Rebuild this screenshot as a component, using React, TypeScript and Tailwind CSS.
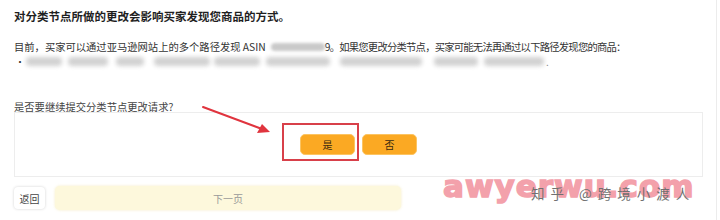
import React from 'react';

const blurBits = [
  { w: 36, ml: 0 },
  { w: 40, ml: 6 },
  { w: 28, ml: 8 },
  { w: 56, ml: 10 },
  { w: 46, ml: 4 },
  { w: 64, ml: 6 },
  { w: 82, ml: 10 },
  { w: 44, ml: 12 },
  { w: 60, ml: 6 },
];

function App() {
  return (
    <div className="relative w-[720px] h-[220px] overflow-hidden bg-white font-['Noto_Sans_CJK_SC',sans-serif]">
      <div className="w-[717px] h-full border-r border-[#ececec] pl-[14px] pr-[13px] pt-[8px]">
        <h1 className="text-[11.5px] leading-[16px] font-bold text-[#1f1f1f]">
          对分类节点所做的更改会影响买家发现您商品的方式。
        </h1>

        <p className="mt-[15px] text-[10.3px] leading-[15px] text-[#333] flex items-center whitespace-nowrap">
          <span>目前，买家可以通过亚马逊网站上的多个路径发现 ASIN</span>
          <span className="inline-block w-[54px] h-[8px] ml-[5px] rounded-full bg-[#c9c9c9] blur-[1.5px]"></span>
          <span className="tracking-[-0.75px]">9。如果您更改分类节点，买家可能无法再通过以下路径发现您的商品：</span>
        </p>
        <div className="flex items-center h-[15px] text-[10px] text-[#333]">
          <span className="w-[12px] pl-[1px]">•</span>
          {blurBits.map((b, i) => (
            <span
              key={i}
              className="inline-block h-[9px] rounded-sm bg-[#d2d2d2] blur-[2px]"
              style={{ width: b.w, marginLeft: b.ml }}
            ></span>
          ))}
          <span className="ml-[2px] text-[#888]">.</span>
        </div>

        <p className="mt-[30px] text-[10.3px] leading-[15px] text-[#444]">是否要继续提交分类节点更改请求?</p>

        <div className="mt-[-2px] w-[689px] h-[65px] border border-[#ededed] flex items-center justify-center gap-[7px]">
          <button className="w-[55px] h-[21px] rounded-[5px] bg-[#fba923] border border-[#fcc462] text-[10px] text-[#3a2a10]">
            是
          </button>
          <button className="w-[55px] h-[21px] rounded-[5px] bg-[#fba923] border border-[#fcc462] text-[10px] text-[#3a2a10]">
            否
          </button>
        </div>

        <div className="mt-[9px] flex items-center gap-[10px]">
          <button className="w-[31px] h-[22px] rounded-[4px] bg-white shadow-[0_0_3px_rgba(0,0,0,0.18)] text-[10px] text-[#444]">
            返回
          </button>
          <div className="w-[346px] h-[24px] rounded-[5px] bg-[#fdf8dc] shadow-[0_0_3px_rgba(240,225,160,0.6)] flex items-center justify-center text-[10px] text-[#999]">
            下一页
          </div>
        </div>
      </div>

      {/* red annotation */}
      <div className="absolute left-[282px] top-[123px] w-[77px] h-[38px] border-2 border-[#d8404a]"></div>
      <svg className="absolute left-0 top-0" width="720" height="220" viewBox="0 0 720 220">
        <line x1="203" y1="107" x2="262" y2="129" stroke="#e0343e" strokeWidth="2" strokeLinecap="round" />
        <polygon points="270,132 257,133 262,124" fill="#e0343e" />
      </svg>

      {/* watermark */}
      <div className="absolute left-[443px] top-[167px] text-[31px] leading-[38px] font-bold tracking-[1px] text-[#f3a1ab] [-webkit-text-stroke:1.5px_#f3a1ab] font-['DejaVu_Sans',sans-serif]">
        awyerwu.com
      </div>
      <div className="absolute left-[531px] top-[184px] text-[13.5px] leading-[18px] tracking-[6px] text-[#707070] whitespace-nowrap">
        知乎 @跨境小渡人
      </div>
    </div>
  );
}

export default App;
